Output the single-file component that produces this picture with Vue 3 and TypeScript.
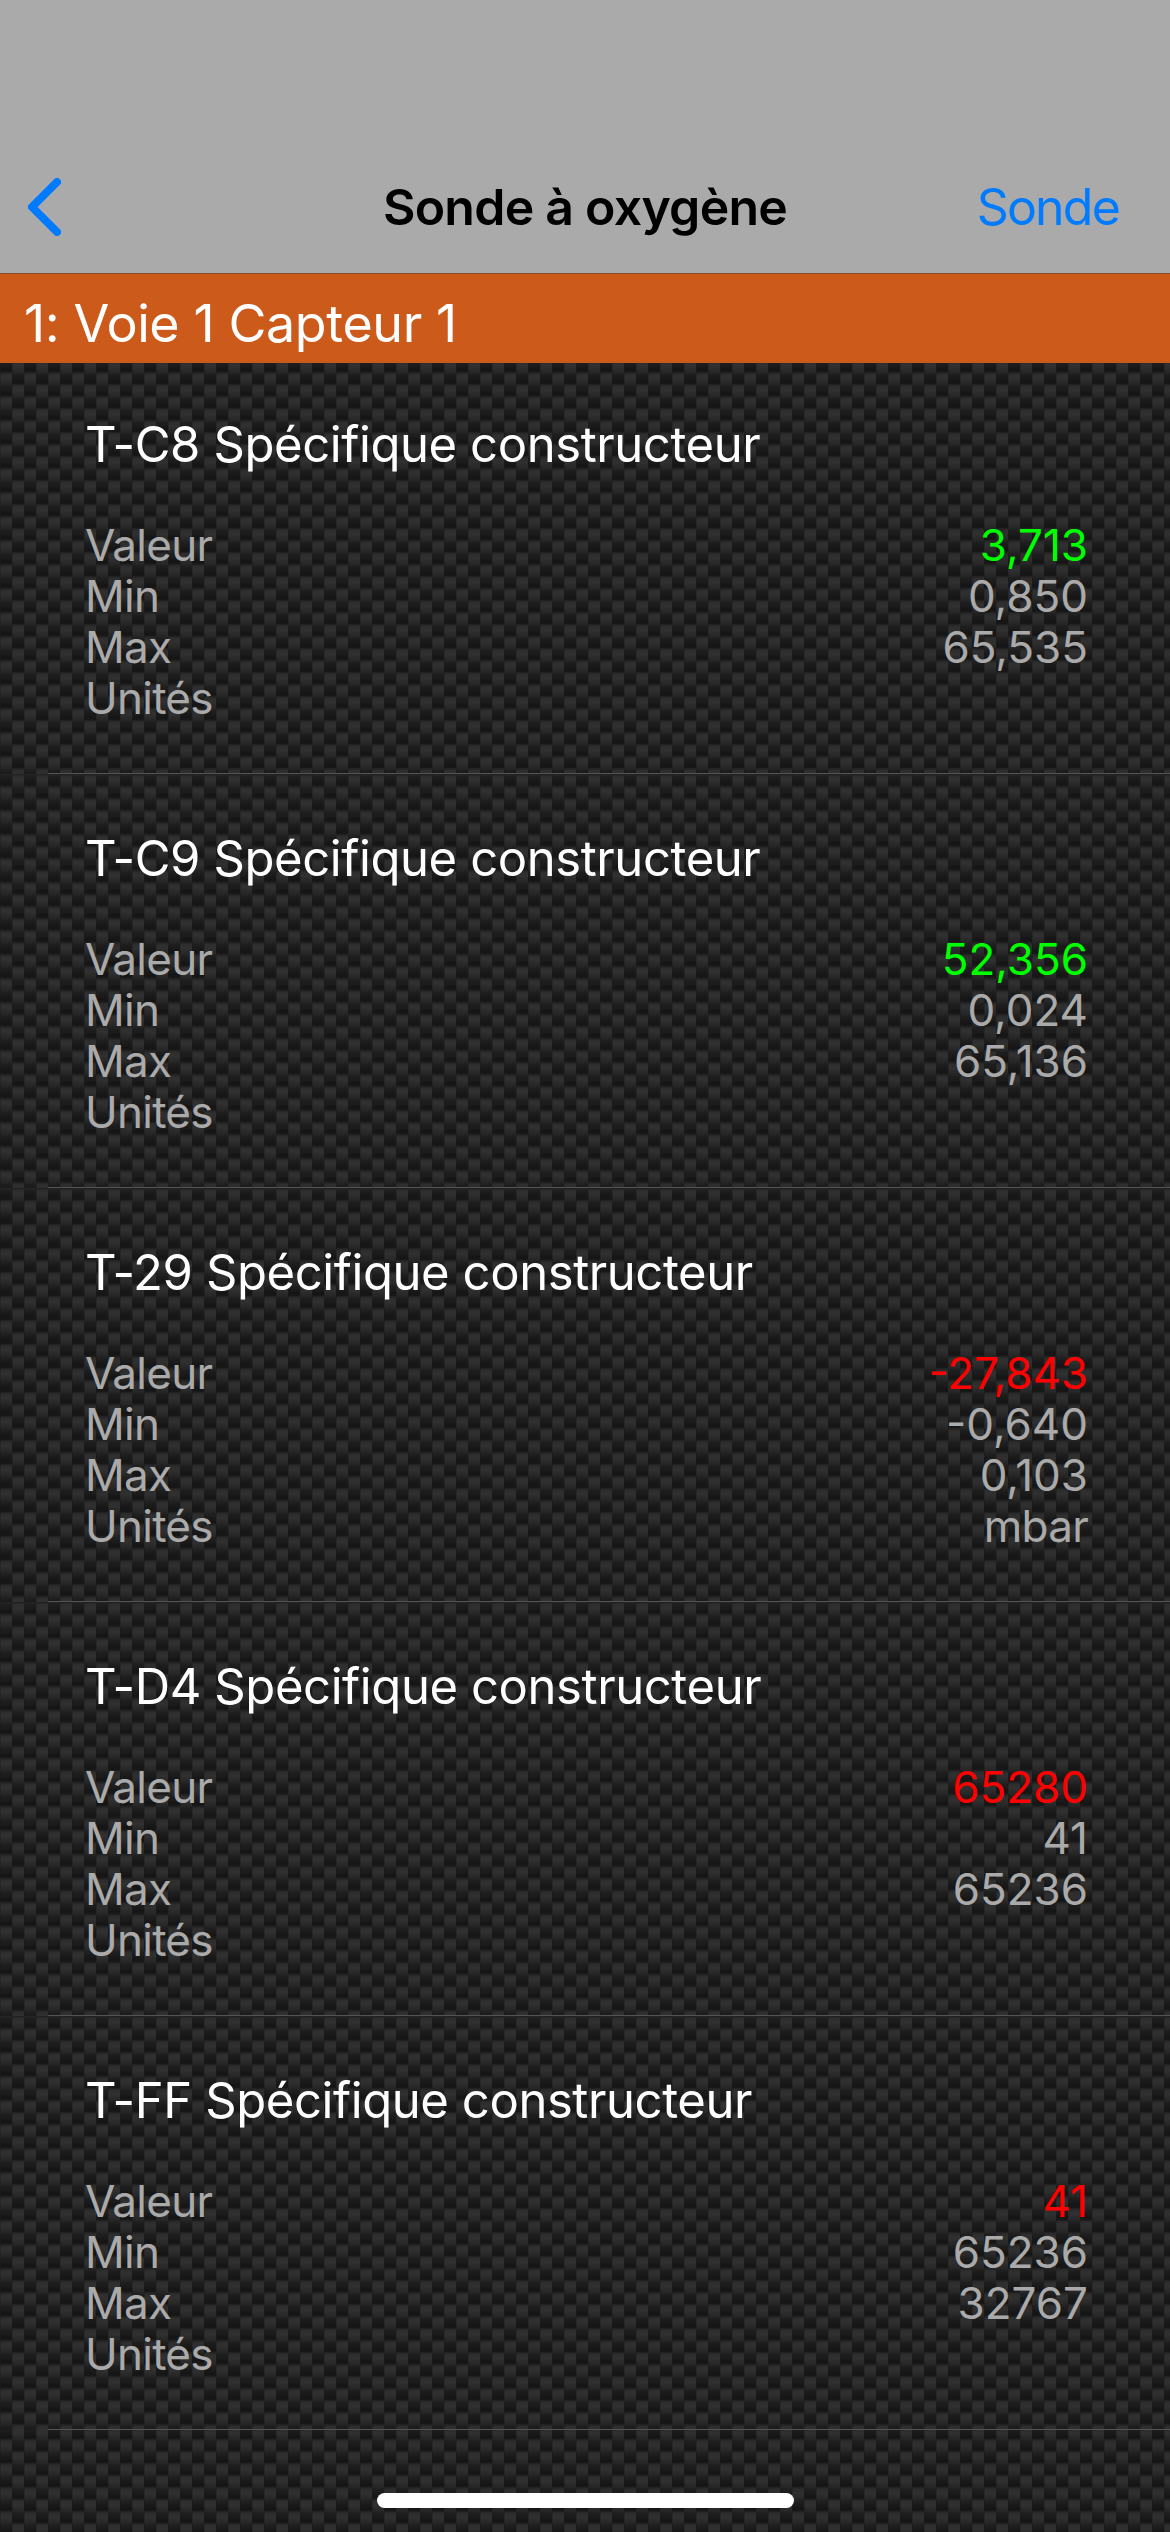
<script setup lang="ts">
interface Reading {
  title: string
  value: string
  ok: boolean
  min: string
  max: string
  unit: string
}

const readings: Reading[] = [
  { title: 'T-C8 Spécifique constructeur', value: '3,713', ok: true, min: '0,850', max: '65,535', unit: '' },
  { title: 'T-C9 Spécifique constructeur', value: '52,356', ok: true, min: '0,024', max: '65,136', unit: '' },
  { title: 'T-29 Spécifique constructeur', value: '-27,843', ok: false, min: '-0,640', max: '0,103', unit: 'mbar' },
  { title: 'T-D4 Spécifique constructeur', value: '65280', ok: false, min: '41', max: '65236', unit: '' },
  { title: 'T-FF Spécifique constructeur', value: '41', ok: false, min: '65236', max: '32767', unit: '' },
]
</script>

<template>
  <div class="screen">
    <header class="navbar">
      <svg class="back" width="33" height="58" viewBox="0 0 33 58">
        <path d="M29 4 L4 29 L29 54" fill="none" stroke="#007aff" stroke-width="8" stroke-linecap="round" stroke-linejoin="round" />
      </svg>
      <h1 class="title">Sonde à oxygène</h1>
      <span class="action">Sonde</span>
    </header>
    <div class="section"><span>1: Voie 1 Capteur 1</span></div>
    <main class="list">
      <article v-for="r in readings" :key="r.title" class="cell carbon">
        <h2 class="name">{{ r.title }}</h2>
        <dl class="rows">
          <div class="row"><dt>Valeur</dt><dd :class="r.ok ? 'good' : 'bad'">{{ r.value }}</dd></div>
          <div class="row"><dt>Min</dt><dd>{{ r.min }}</dd></div>
          <div class="row"><dt>Max</dt><dd>{{ r.max }}</dd></div>
          <div class="row"><dt>Unités</dt><dd class="unit">{{ r.unit }}</dd></div>
        </dl>
        <div class="rule"></div>
      </article>
      <div class="tail carbon"><div class="home"></div></div>
    </main>
  </div>
</template>

<style>
body { margin: 0; background: #1e1e1e; }
</style>

<style scoped>
.screen {
  width: 1170px;
  height: 2532px;
  display: flex;
  flex-direction: column;
  overflow: hidden;
  font-family: Inter, "Liberation Sans", sans-serif;
  font-weight: 400;
}
.navbar {
  box-sizing: border-box;
  height: 274px;
  flex: none;
  padding-top: 141px;
  background: #aaa;
  border-bottom: 1px solid #824b29;
  display: grid;
  grid-template-columns: 1fr auto 1fr;
  align-items: center;
}
.back { margin-left: 28px; }
.title { margin: 0; font-size: 50px; font-weight: 600; letter-spacing: -0.76px; color: #000; }
.action { justify-self: end; margin-right: 51px; font-size: 50px; letter-spacing: -1.8px; color: #007aff; }
.section {
  height: 89px;
  flex: none;
  background: #cc5a1b;
  color: #fff;
  font-size: 52px;
  line-height: 100px;
  padding-left: 24px;
  letter-spacing: -0.4px;
}
.list { flex: 1; display: flex; flex-direction: column; }
/* Woven tile: two 12px strands, the left one shifted down by half a period */
.carbon {
  background:
    url("data:image/svg+xml,%3Csvg xmlns='http://www.w3.org/2000/svg' width='24' height='24'%3E%3Cdefs%3E%3ClinearGradient id='g' x2='0' y2='1'%3E%3Cstop stop-color='%231e1e1e'/%3E%3Cstop offset='.1' stop-color='%232d2d2d'/%3E%3Cstop offset='.25' stop-color='%23303030'/%3E%3Cstop offset='.48' stop-color='%23272727'/%3E%3Cstop offset='.6' stop-color='%231f1f1f'/%3E%3Cstop offset='.9' stop-color='%23151515'/%3E%3Cstop offset='1' stop-color='%23191919'/%3E%3C/linearGradient%3E%3C/defs%3E%3Cg fill='url(%23g)'%3E%3Crect y='-12' width='12' height='24'/%3E%3Crect y='12' width='12' height='24'/%3E%3Crect x='12' width='12' height='24'/%3E%3C/g%3E%3Cpath d='M.5 0v24M12.5 0v24' stroke='%231c1c1c' stroke-opacity='.4'/%3E%3C/svg%3E") 0 0;
}
.cell {
  height: 414px;
  flex: none;
  box-sizing: border-box;
  padding: 54px 82px 0 85px;
  display: flex;
  flex-direction: column;
}
.cell:first-child { height: 411px; padding-top: 51px; }
.cell:first-child, .tail { background-position: 0 -3px; }
.name { margin: 0; height: 62px; line-height: 62px; font-size: 49px; font-weight: 400; letter-spacing: -0.41px; color: #fff; }
.rows { margin: 44px 0 0; }
.row { display: flex; justify-content: space-between; height: 51px; line-height: 51px; font-size: 44px; color: #aaa; }
dt, .unit { letter-spacing: -0.75px; }
dd { margin: 0; }
.good { color: #0f0; }
.bad { color: #f00; }
.rule { height: 1px; margin: auto -82px 0 -37px; background: #545454; }
.tail { flex: 1; display: flex; justify-content: center; align-items: flex-end; }
.home { width: 417px; height: 15px; border-radius: 8px; background: #fff; margin-bottom: 24px; }
</style>
